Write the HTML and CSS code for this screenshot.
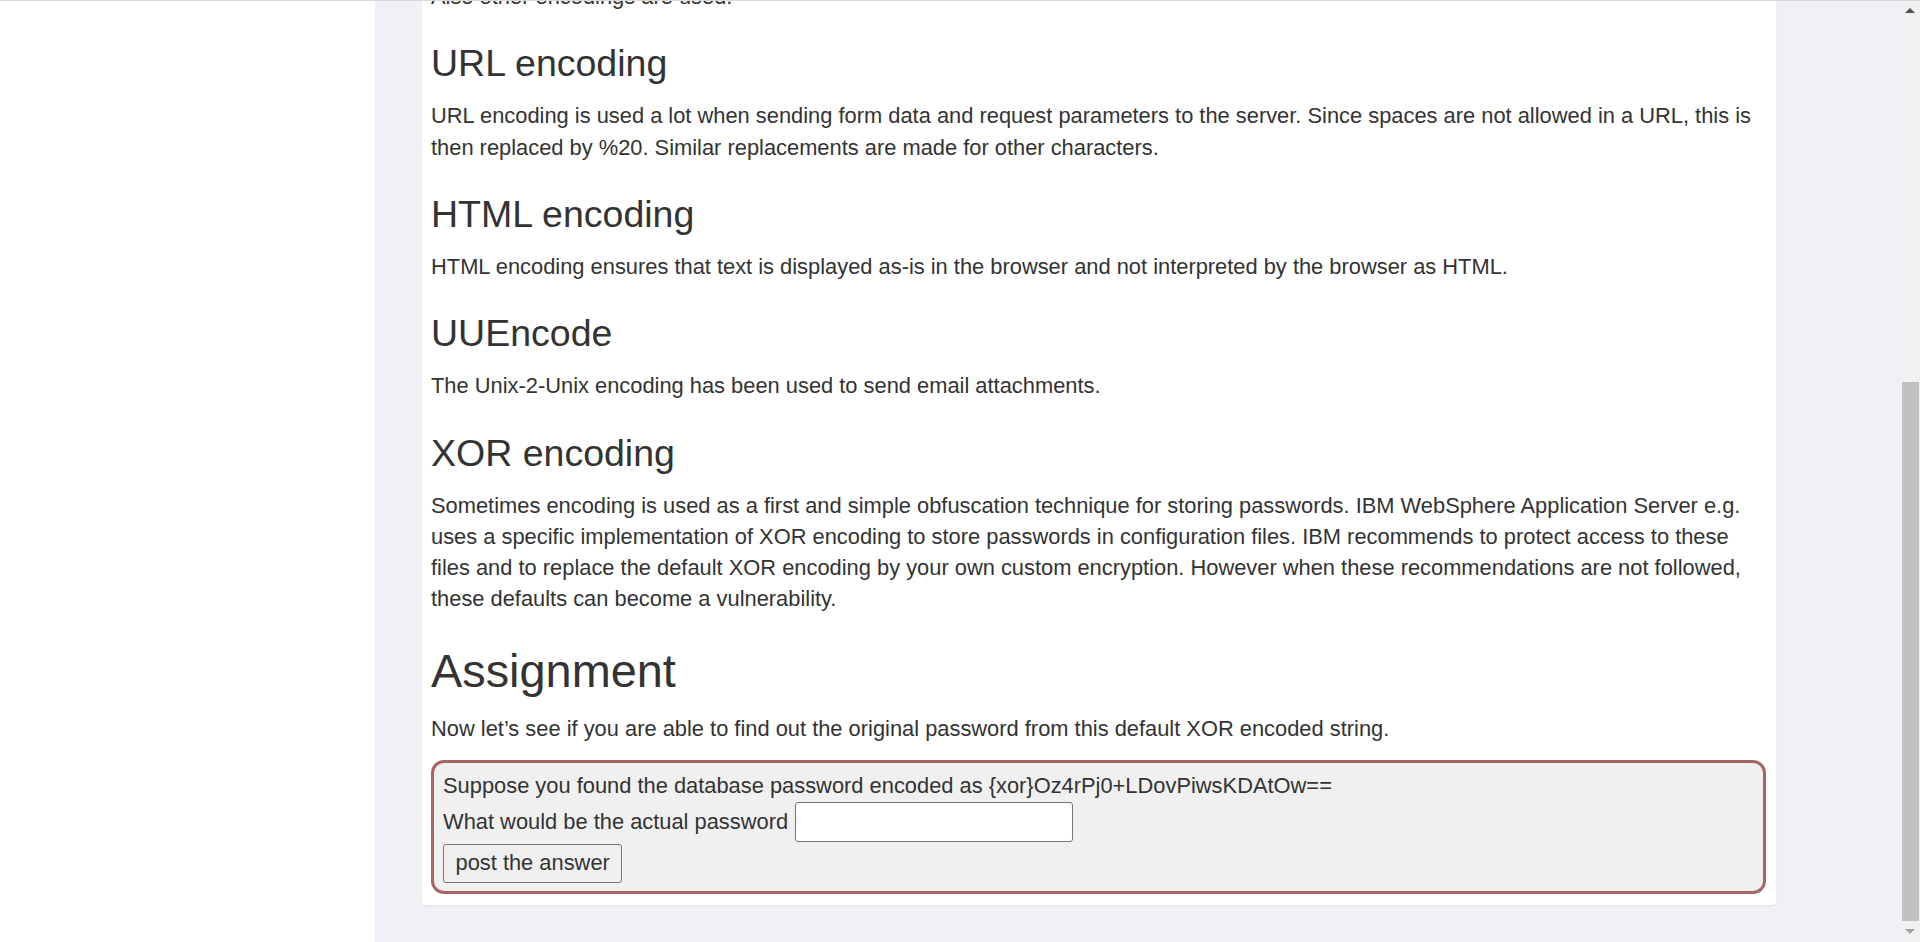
FILE: index.html
```html
<!DOCTYPE html>
<html lang="en">
<head>
<meta charset="utf-8">
<title>XOR encoding</title>
<link rel="stylesheet" href="styles.css">
</head>
<body>
<div class="topline"></div>
<div class="page">
  <aside class="sidebar"></aside>
  <main class="main">
    <section class="card">
      <p>Also other encodings are used.</p>
      <h3>URL encoding</h3>
      <p>URL encoding is used a lot when sending form data and request parameters to the server. Since spaces are not allowed in a URL, this is then replaced by %20. Similar replacements are made for other characters.</p>
      <h3>HTML encoding</h3>
      <p>HTML encoding ensures that text is displayed as-is in the browser and not interpreted by the browser as HTML.</p>
      <h3>UUEncode</h3>
      <p>The Unix-2-Unix encoding has been used to send email attachments.</p>
      <h3>XOR encoding</h3>
      <p>Sometimes encoding is used as a first and simple obfuscation technique for storing passwords. IBM WebSphere Application Server e.g. uses a specific implementation of XOR encoding to store passwords in configuration files. IBM recommends to protect access to these files and to replace the default XOR encoding by your own custom encryption. However when these recommendations are not followed, these defaults can become a vulnerability.</p>
      <h2>Assignment</h2>
      <p>Now let’s see if you are able to find out the original password from this default XOR encoded string.</p>
      <form class="attack">
        <div class="q-line">Suppose you found the database password encoded as {xor}Oz4rPj0+LDovPiwsKDAtOw==</div>
        <div class="q-row">
          <label class="q-label" for="answer">What would be the actual password</label>
          <input class="q-input" id="answer" type="text">
        </div>
        <div class="q-actions">
          <button class="q-button" type="button">post the answer</button>
        </div>
      </form>
    </section>
  </main>
  <div class="scrollbar">
    <div class="sb-btn"><span class="sb-up"></span></div>
    <div class="sb-track"><div class="sb-thumb"></div></div>
    <div class="sb-btn"><span class="sb-down"></span></div>
  </div>
</div>
</body>
</html>
```
FILE: styles.css
```css
* {
  box-sizing: border-box;
}

html, body {
  margin: 0;
  padding: 0;
  height: 942px;
  overflow: hidden;
}

body {
  font-family: "Liberation Sans", Arial, sans-serif;
  font-size: 21.875px;
  line-height: 1.428571;
  color: #333;
  background: #fff;
}

.topline {
  height: 1px;
  background: #dadada;
}

.page {
  display: flex;
  height: 941px;
}

.sidebar {
  width: 375px;
  flex: none;
  background: #fff;
}

.main {
  flex: 1;
  background: #eff1f6;
  overflow: hidden;
  padding-left: 47px;
}

/* the page is scrolled down: the card's top lies above the viewport */
.card {
  width: 1354px;
  margin-top: -30px;
  padding: 10px 10px 11px 9px;
  background: #fff;
  border-radius: 4px;
  box-shadow: 0 1px 2px rgba(0, 0, 0, 0.07);
}

.card p {
  margin: 0 0 15.625px;
}

.card h3,
.card h2 {
  font-weight: 500;
  line-height: 1.1;
  color: #333;
  margin: 31.25px 0 15.625px;
}

.card h3 {
  font-size: 37.5px;
}

.card h2 {
  font-size: 46.875px;
}

.attack {
  margin-top: 16px;
  background: #f0f0f0;
  border: 3px solid #a96566;
  border-radius: 13px;
  padding: 7px 9px 8px 9px;
  display: flex;
  flex-direction: column;
  align-items: flex-start;
}

.q-line {
  line-height: 31.25px;
}

.q-row {
  display: flex;
  align-items: center;
  height: 40px;
}

.q-label {
  line-height: 31.25px;
}

.q-input {
  margin-left: 7px;
  width: 278px;
  height: 40px;
  padding: 0 4px;
  font: inherit;
  color: inherit;
  background: #fff;
  border: 1px solid #767676;
  border-radius: 3px;
}

.q-actions {
  margin-top: 2px;
}

.q-button {
  height: 39.5px;
  padding: 0 11.5px;
  font: inherit;
  line-height: 1;
  color: #333;
  background: #efefef;
  border: 1px solid #767676;
  border-radius: 3px;
}

.scrollbar {
  width: 20px;
  flex: none;
  background: #f1f1f1;
  display: flex;
  flex-direction: column;
}

.sb-btn {
  height: 20px;
  flex: none;
  display: flex;
  align-items: center;
  justify-content: center;
}

.sb-up {
  width: 0;
  height: 0;
  border-left: 5px solid transparent;
  border-right: 5px solid transparent;
  border-bottom: 5px solid #505050;
  margin-top: -2px;
}

.sb-down {
  width: 0;
  height: 0;
  border-left: 5px solid transparent;
  border-right: 5px solid transparent;
  border-top: 5px solid #a3a3a3;
  margin-top: -2px;
}

.sb-track {
  flex: 1;
  display: flex;
  flex-direction: column;
  justify-content: flex-end;
  align-items: center;
  padding-bottom: 1px;
}

.sb-thumb {
  width: 17px;
  height: 539px;
  background: #c1c1c1;
}
```
